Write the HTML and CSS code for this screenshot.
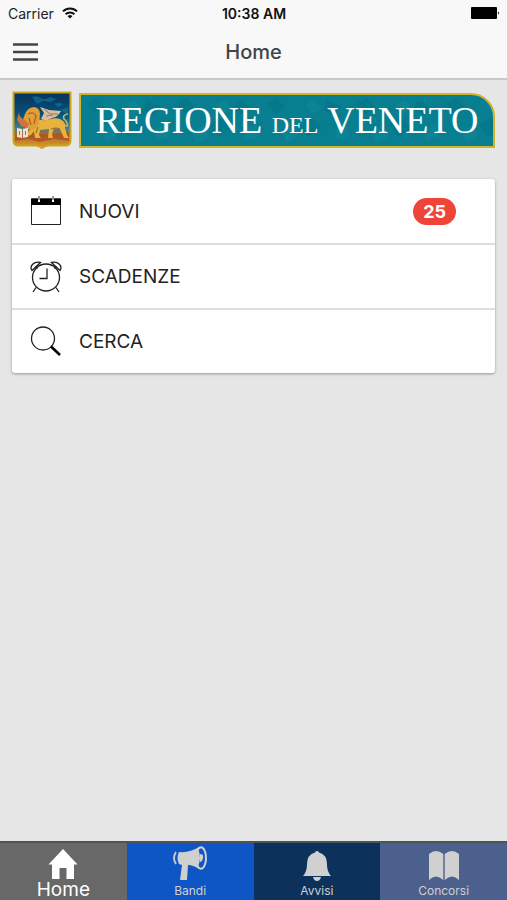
FILE: index.html
```html
<!DOCTYPE html>
<html lang="it">
<head>
    <meta charset="UTF-8">
    <meta name="viewport" content="width=device-width, initial-scale=1.0">
    <title>Home - Regione del Veneto</title>
    <link rel="stylesheet" href="styles.css">
</head>
<body>
    <header class="top">
        <div class="status-bar">
            <div class="carrier">
                <span>Carrier</span>
                <svg width="16" height="12" viewBox="0 0 16 12" fill="none" stroke="#111" stroke-width="2">
                    <path d="M1 4.4a10 10 0 0 1 14 0M3.6 7.2a6.3 6.3 0 0 1 8.8 0"/>
                    <path d="M8 11.6L5.6 9.2a3.5 3.5 0 0 1 4.8 0z" fill="#111" stroke="none"/>
                </svg>
            </div>
            <span class="clock">10:38 AM</span>
            <svg class="battery" width="29" height="12" viewBox="0 0 29 12">
                <rect width="26" height="12" rx="1"/>
                <path d="M27 4.500q2 1.500 0 3z"/>
            </svg>
        </div>
        <div class="nav-bar">
            <button class="menu-button" type="button" aria-label="Menu">
                <svg width="26" height="20" viewBox="0 0 26 20" stroke="#444" stroke-width="2.400">
                    <path d="M0 2.500h25M0 10h25M0 17.500h25"/>
                </svg>
            </button>
            <h1>Home</h1>
        </div>
    </header>

    <main class="content">
        <div class="banner">
            <svg class="crest" width="60" height="58" viewBox="0 0 60 58">
                <defs>
                    <linearGradient id="sky" x1="0" y1="0" x2="0" y2="1">
                        <stop offset="0" stop-color="#06335c"/>
                        <stop offset=".4" stop-color="#07517b"/>
                        <stop offset=".66" stop-color="#3f8391"/>
                        <stop offset=".74" stop-color="#a8682c"/>
                        <stop offset="1" stop-color="#e09a22"/>
                    </linearGradient>
                </defs>
                <path d="M1.500 1.500h57v48q0 5-5 5H37q-4 0-7 2.500-3-2.500-7-2.500H6.500q-5 0-5-5z" fill="url(#sky)" stroke="#cda51d" stroke-width="2"/>
                <path d="M20 6q5-2 9 1t9-1l6 2-5 3-8-1-6 3zM42 13q5-2 9 0l-4 3zM48 19l8-3v8z" fill="#167b9c" opacity=".6"/>
                <path d="M3 44l16-2 18 2 20-3v9l-15-2-14 3-12-3-13 2z" fill="#a94c22" opacity=".7"/>
                <!-- tail -->
                <path d="M50 31q7 8 5 1-1-3-3-4-2-4 4-5" fill="none" stroke="#b3b774" stroke-width="1.600"/>
                <!-- wings -->
                <path d="M29 28l3-6-4-6 9 3 12 1q-3 6-9 7l-6 3z" fill="#d9bea0"/>
                <path d="M32 18l6 5h8M34 25l7-1" fill="none" stroke="#967766"/>
                <!-- body and legs -->
                <path d="M23 27q8 4 16 1 8-2 12 2 3 3 2 7l2 7 2 3h-5l-4-9-6-1-2 6 1 4h-5l1-9-9 1-1 5 2 3h-6l-1-7-3 4-4 1v-3l4-4z" fill="#e8b23c"/>
                <path d="M39 38q5-2 9 0M26 36l-2 6" fill="none" stroke="#ad6e22" stroke-width="1.200"/>
                <!-- mane and head -->
                <path d="M13 23q2-6 9-7 6 1 6 7l-1 10-5 6-7-1-5-6z" fill="#e0a036"/>
                <path d="M7 21q0 6 6 8l4 4-2 4-6-2-4-6z" fill="#cf713d"/>
                <path d="M16 23q6-3 8 2l-2 8M17 27l2 7" fill="none" stroke="#a96224" stroke-width="1.200"/>
                <!-- open book -->
                <path d="M5 37l5 1 6-1v9l-6 1-5-1z" fill="#eee3cf"/>
                <path d="M10.500 38v9M7.500 40v4M13.500 40v4" stroke="#a86b54"/>
            </svg>
            <div class="banner-title">
                <svg class="banner-texture" width="100%" height="100%" aria-hidden="true">
                    <defs>
                        <pattern id="mottle" width="90" height="54" patternUnits="userSpaceOnUse">
                            <path d="M4 8l12-5 8 9-9 7zM38 30l12-7 11 10-14 9zM66 5l14 6-7 9-11-5z" fill="#006b80"/>
                            <path d="M20 36l13-6 4 12-11 6zM45 9l9-4 7 9-10 5zM75 34l10-4 3 12-14 3z" fill="#138c9c"/>
                        </pattern>
                    </defs>
                    <rect width="100%" height="100%" fill="url(#mottle)" opacity=".35"/>
                </svg>
                <span class="banner-text">REGIONE <small>DEL</small> VENETO</span>
            </div>
        </div>

        <nav class="card">
            <a class="item" href="#nuovi">
                <svg width="32" height="32" viewBox="0 0 32 32">
                    <path d="M1.500 4h29v25.500h-29z" fill="#fff" stroke="#222"/>
                    <path d="M1 3.500h30V10H1z" fill="#000"/>
                    <path d="M9 1v6M23 1v6" stroke="#fff" stroke-width="2"/>
                    <path d="M9 1v4M23 1v4" stroke="#333"/>
                </svg>
                <span>NUOVI</span>
                <span class="badge">25</span>
            </a>
            <a class="item" href="#scadenze">
                <svg width="32" height="32" viewBox="0 0 32 32" fill="none" stroke="#222" stroke-width="1.300">
                    <circle cx="16" cy="16.500" r="13.500"/>
                    <path d="M17 7.500V17.500H9.500"/>
                    <path d="M2 9.500C-1 5 4 0 10.500 1.500zM30 9.500C33 5 28 0 21.500 1.500z"/>
                    <path d="M5.500 5.500l2 2M26.500 5.500l-2 2M6 26.500l-3 4.500M26 26.500l3 4.500"/>
                </svg>
                <span>SCADENZE</span>
            </a>
            <a class="item" href="#cerca">
                <svg width="32" height="32" viewBox="0 0 32 32" fill="none" stroke="#222">
                    <circle cx="13" cy="12.500" r="11.500" stroke-width="1.300"/>
                    <path d="M21 20.500l9 8.500" stroke="#000" stroke-width="2.600"/>
                </svg>
                <span>CERCA</span>
            </a>
        </nav>
    </main>

    <nav class="tabs">
        <a class="tab tab-home" href="#home">
            <svg width="30" height="32" viewBox="0 0 30 32" fill="#fff">
                <path d="M15 1l14.500 15.500H26V31h-7.500V20h-7v11H4V16.500H.500z"/>
            </svg>
            <span>Home</span>
        </a>
        <a class="tab tab-bandi" href="#bandi">
            <svg width="36" height="36" viewBox="0 0 36 36" fill="#d0d0d0">
                <path d="M7 6q11 1 20-5v22q-6-4-11-4l-1 15H8l2-15-3-1q-3-6 0-12z"/>
                <path d="M4 6q-4 6 0 12" fill="none" stroke="#d0d0d0" stroke-width="1.800"/>
                <ellipse cx="29" cy="12" rx="5" ry="10.700" fill="#0e56c5" stroke="#d0d0d0" stroke-width="2"/>
                <path d="M26 3q4 8 0 18-3-9 0-18zM28 8q4 0 3 4t-3 4z"/>
            </svg>
            <span>Bandi</span>
        </a>
        <a class="tab tab-avvisi" href="#avvisi">
            <svg width="28" height="32" viewBox="0 0 28 32" fill="#d0d0d0">
                <path d="M14 1q2 0 2 1.500 8 2 8 12 0 7 4 11.500H0q4-4.500 4-11.500 0-10 8-12Q12 1 14 1zM10 27h8q-1 4-4 4t-4-4z"/>
            </svg>
            <span>Avvisi</span>
        </a>
        <a class="tab tab-concorsi" href="#concorsi">
            <svg width="32" height="32" viewBox="0 0 32 32" fill="#d0d0d0">
                <path d="M1 4q7-6 14.300 0v26Q8 23 1 30zM16.700 4Q24 -2 31 4v26q-7-7-14.300 0z"/>
            </svg>
            <span>Concorsi</span>
        </a>
    </nav>
</body>
</html>
```

FILE: styles.css
```css
:root {
    --page-color: #e6e6e6;
    --bar-color: #f8f8f8;
    --line-color: #dedede;
    --gold: #d4b32c;
    --tab-text: #d0d0d0;
}

* {
    box-sizing: border-box;
}

body {
    margin: 0;
    min-height: 100vh;
    display: flex;
    flex-direction: column;
    background-color: var(--page-color);
    color: #222;
    font-family: Inter, Roboto, sans-serif;
}

a {
    color: inherit;
    text-decoration: none;
}

svg {
    display: block;
    flex-shrink: 0;
}

.top {
    background-color: var(--bar-color);
    border-bottom: 2px solid #c8c8c8;
}

.status-bar {
    display: grid;
    grid-template-columns: 1fr auto 1fr;
    align-items: center;
    height: 26px;
    padding: 0 7px 0 8px;
    font-size: 14px;
}

.carrier {
    display: flex;
    align-items: center;
    gap: 8px;
}

.clock {
    font-weight: 600;
    color: #111;
}

.battery {
    justify-self: end;
}

.nav-bar {
    display: grid;
    grid-template-columns: 1fr auto 1fr;
    align-items: center;
    height: 52px;
    padding: 0 13px;
}

.menu-button {
    justify-self: start;
    padding: 0;
    border: 0;
    background: none;
}

.nav-bar h1 {
    margin: 0;
    font-size: 20px;
    font-weight: 500;
    color: #444;
}

.content {
    flex: 1;
    padding: 11px 12px;
}

.banner {
    display: flex;
    align-items: center;
    gap: 7px;
}

.banner-title {
    display: grid;
    flex: 1;
    height: 55px;
    overflow: hidden;
    background-color: #087f91;
    border: 2px solid var(--gold);
    border-top-right-radius: 24px;
}

.banner-texture,
.banner-text {
    grid-area: 1 / 1;
}

.banner-text {
    place-self: center;
    font-family: "Liberation Serif", serif;
    font-size: 38px;
    line-height: 50px;
    color: #fff;
    white-space: nowrap;
}

.banner-text small {
    font-size: 24px;
}

.card {
    margin: 30px 0 0;
    overflow: hidden;
    background-color: #fff;
    border-radius: 3px;
    box-shadow: 0 1px 3px rgba(0, 0, 0, 0.35);
}

.item {
    display: flex;
    align-items: center;
    gap: 17px;
    height: 64px;
    padding: 0 39px 0 18px;
    font-size: 19px;
}

.item + .item {
    height: 65px;
    border-top: 2px solid var(--line-color);
}

.badge {
    margin-left: auto;
    padding: 0 10px;
    border-radius: 14px;
    background-color: #ef4437;
    color: #fff;
    font-size: 18px;
    font-weight: 700;
    line-height: 27px;
}

.tabs {
    display: grid;
    grid-template-columns: repeat(4, 1fr);
    height: 59px;
    border-top: 2px solid #4d5359;
}

.tab {
    display: flex;
    flex-direction: column;
    align-items: center;
    justify-content: flex-end;
    color: var(--tab-text);
    font-size: 12px;
    line-height: 18px;
}

.tab-home {
    background-color: #686868;
    color: #fff;
    font-size: 19px;
}

.tab-home span {
    line-height: 20px;
}

.tab-bandi {
    background-color: #0e56c5;
}

.tab-avvisi {
    background-color: #0c315b;
}

.tab-concorsi {
    background-color: #4c608d;
}
```
